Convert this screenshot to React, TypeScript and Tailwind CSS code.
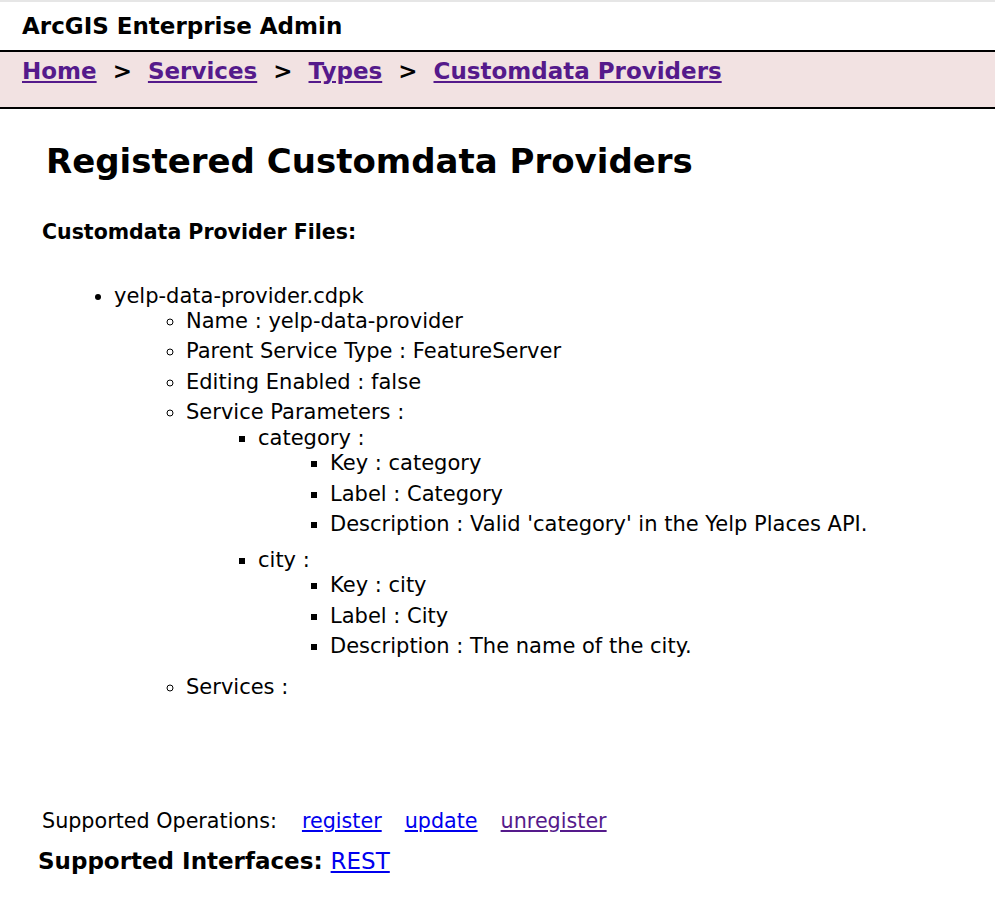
import React from 'react';

const verdana = { fontFamily: '"DejaVu Sans", Verdana, sans-serif' };

type Node = { label: string; children?: Node[] };

const params: Node[] = [
  {
    label: 'category :',
    children: [
      { label: 'Key : category' },
      { label: 'Label : Category' },
      { label: "Description : Valid 'category' in the Yelp Places API." },
    ],
  },
  {
    label: 'city :',
    children: [
      { label: 'Key : city' },
      { label: 'Label : City' },
      { label: 'Description : The name of the city.' },
    ],
  },
];

const fileProps: Node[] = [
  { label: 'Name : yelp-data-provider' },
  { label: 'Parent Service Type : FeatureServer' },
  { label: 'Editing Enabled : false' },
  { label: 'Service Parameters :', children: params },
  { label: 'Services :' },
];

const listStyles = ['list-disc', 'list-[circle]', 'list-[square]', 'list-[square]'];

const Tree: React.FC<{ items: Node[]; depth: number }> = ({ items, depth }) => (
  <ul className={`${listStyles[depth]} pl-[72px]`}>
    {items.map((item) => (
      <li key={item.label} className="pb-[5px] leading-[25.5px]">
        {item.label}
        {item.children && <Tree items={item.children} depth={depth + 1} />}
      </li>
    ))}
  </ul>
);

const Crumb: React.FC<{ label: string }> = ({ label }) => (
  <a href="#" className="text-[#551a8b] underline">
    {label}
  </a>
);

const App: React.FC = () => {
  return (
    <div className="min-h-screen w-full bg-white text-black" style={verdana}>
      <header className="h-[52px] border-t-2 border-b-2 border-t-[#e6e6e6] border-b-black px-[22px] flex items-center">
        <span className="text-[23px] font-bold">ArcGIS Enterprise Admin</span>
      </header>

      <nav className="h-[57px] bg-[#f2e2e2] border-b-2 border-black px-[22px] pt-[2px]">
        <div className="flex items-center gap-[16px] text-[23px] font-bold">
          <Crumb label="Home" />
          <span>&gt;</span>
          <Crumb label="Services" />
          <span>&gt;</span>
          <Crumb label="Types" />
          <span>&gt;</span>
          <Crumb label="Customdata Providers" />
        </div>
      </nav>

      <main className="pl-[42px] pt-[32px]">
        <h2 className="pl-[4px] text-[34px] font-bold leading-[40px]">Registered Customdata Providers</h2>

        <h3 className="mt-[36px] text-[20.5px] font-bold">Customdata Provider Files:</h3>

        <div className="mt-[36px] text-[21px]">
          <ul className="list-disc pl-[72px]">
            <li className="leading-[25px]">
              yelp-data-provider.cdpk
              <Tree items={fileProps} depth={1} />
            </li>
          </ul>
        </div>

        <div className="mt-[101px] flex items-center gap-[23px] text-[20.7px]">
          <span>Supported Operations:</span>
          <a href="#" className="ml-[2px] text-[#0000ee] underline">register</a>
          <a href="#" className="text-[#0000ee] underline">update</a>
          <a href="#" className="text-[#551a8b] underline">unregister</a>
        </div>

        <div className="mt-[7px] -ml-[4px] text-[23px]">
          <span className="font-bold">Supported Interfaces: </span>
          <a href="#" className="text-[#0000ee] underline">REST</a>
        </div>
      </main>
    </div>
  );
};

export default App;
